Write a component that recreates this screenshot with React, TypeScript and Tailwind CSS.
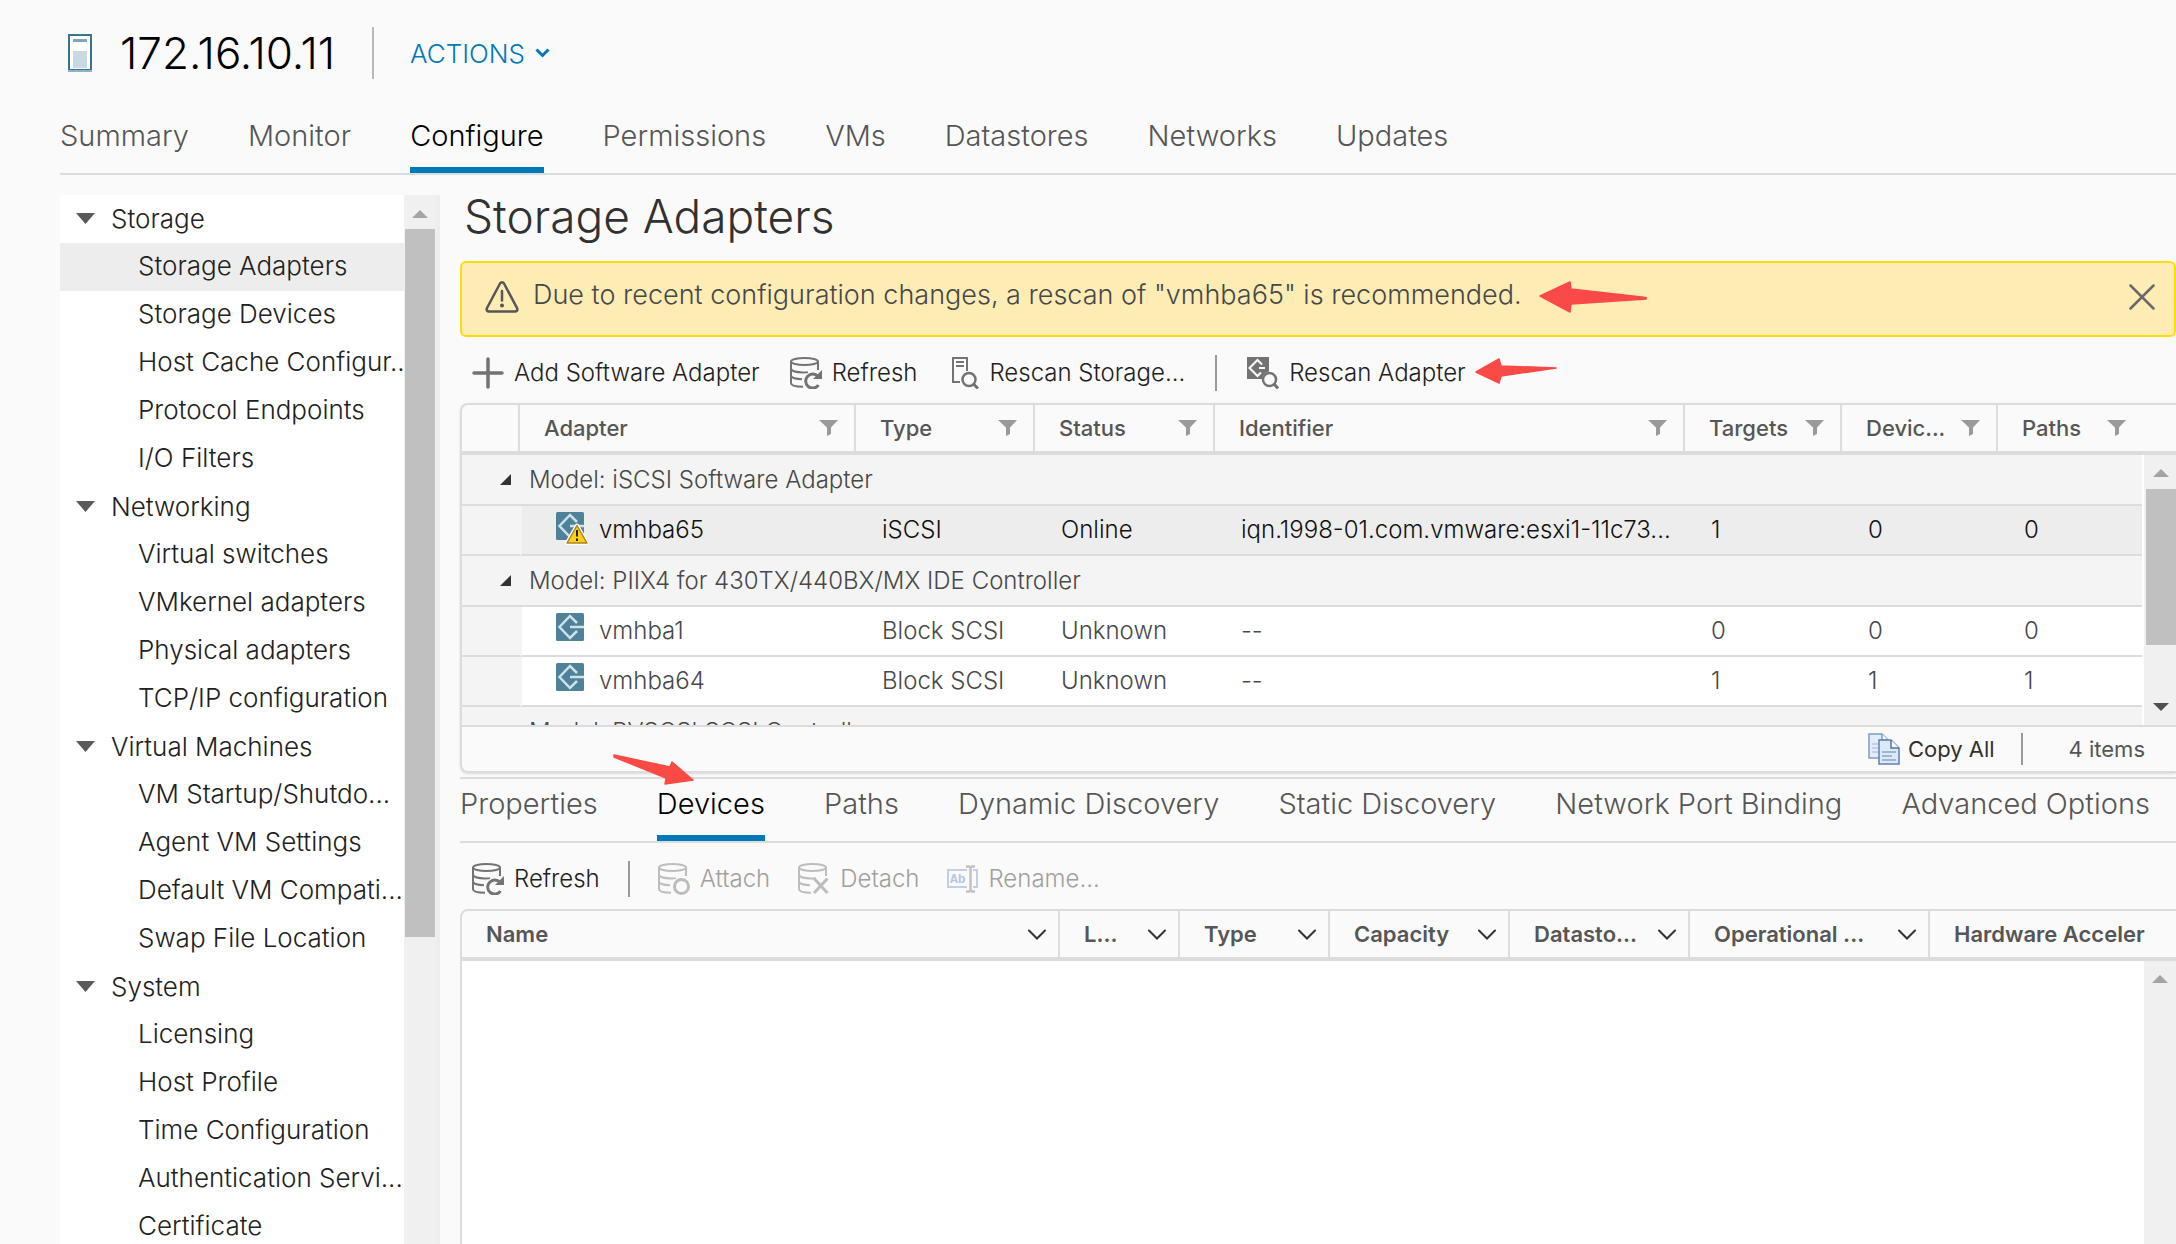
import React from "react";

const TABS = ["Summary", "Monitor", "Configure", "Permissions", "VMs", "Datastores", "Networks", "Updates"];

const SUB_TABS = [
  "Properties",
  "Devices",
  "Paths",
  "Dynamic Discovery",
  "Static Discovery",
  "Network Port Binding",
  "Advanced Options",
];

const MENU = [
  {
    title: "Storage",
    items: ["Storage Adapters", "Storage Devices", "Host Cache Configur...", "Protocol Endpoints", "I/O Filters"],
  },
  {
    title: "Networking",
    items: ["Virtual switches", "VMkernel adapters", "Physical adapters", "TCP/IP configuration"],
  },
  {
    title: "Virtual Machines",
    items: ["VM Startup/Shutdo...", "Agent VM Settings", "Default VM Compati...", "Swap File Location"],
  },
  {
    title: "System",
    items: ["Licensing", "Host Profile", "Time Configuration", "Authentication Servi...", "Certificate"],
  },
];

const ADAPTER_COLUMNS = [
  { label: "Adapter", width: "w-[336px]" },
  { label: "Type", width: "w-[179px]" },
  { label: "Status", width: "w-[180px]" },
  { label: "Identifier", width: "" },
  { label: "Targets", width: "w-[157px]" },
  { label: "Devic...", width: "w-[156px]" },
  { label: "Paths", width: "w-[178px]" },
];

const GROUPS = [
  {
    model: "Model: iSCSI Software Adapter",
    rows: [
      {
        selected: true,
        name: "vmhba65",
        cells: ["iSCSI", "Online", "iqn.1998-01.com.vmware:esxi1-11c73...", "1", "0", "0"],
      },
    ],
  },
  {
    model: "Model: PIIX4 for 430TX/440BX/MX IDE Controller",
    rows: [
      { selected: false, name: "vmhba1", cells: ["Block SCSI", "Unknown", "--", "0", "0", "0"] },
      { selected: false, name: "vmhba64", cells: ["Block SCSI", "Unknown", "--", "1", "1", "1"] },
    ],
  },
  { model: "Model: PVSCSI SCSI Controller", rows: [] },
];

const DEVICE_COLUMNS = [
  { label: "Name", width: "" },
  { label: "L...", width: "w-[120px]" },
  { label: "Type", width: "w-[150px]" },
  { label: "Capacity", width: "w-[180px]" },
  { label: "Datasto...", width: "w-[180px]" },
  { label: "Operational ...", width: "w-[240px]" },
];

function HostIcon() {
  return (
    <svg width="24" height="38" viewBox="0 0 24 38" aria-hidden="true">
      <rect x="1" y="1" width="22" height="35" fill="#fff" stroke="#3a7590" strokeWidth="2" />
      <rect x="0" y="36" width="24" height="2" fill="#8fb3c4" />
      <rect x="5" y="5" width="14" height="3" fill="#7fa5b8" />
      <rect x="5" y="17" width="14" height="17" fill="#c9d9e1" />
    </svg>
  );
}

function Database({ children }: { children: React.ReactNode }) {
  return (
    <svg className="shrink-0" width="32" height="32" viewBox="0 0 32 32" fill="none" stroke="currentColor" strokeWidth="2" aria-hidden="true">
      <ellipse cx="14.5" cy="4.5" rx="13.5" ry="3.5" />
      <path d="M1 4.5V26C1 28.5 6 29.8 13 29.8M28 4.5V13M1 12c1 2.400 7 3.500 13 3.400 2 0 3 0 4-.3M1 19c1 2 5 3 11 3.200" />
      {children}
    </svg>
  );
}

function RefreshIcon() {
  return (
    <Database>
      <path d="M28 19.500A7 7 0 1 0 28.500 28" strokeWidth="3" />
      <path d="M32 13v9h-9z" fill="currentColor" stroke="none" />
    </Database>
  );
}

function AttachIcon() {
  return (
    <Database>
      <circle cx="23.500" cy="23.500" r="7" strokeWidth="3" />
    </Database>
  );
}

function DetachIcon() {
  return (
    <Database>
      <path d="M16 15.500 29.500 30M29.500 15.500 16 30" strokeWidth="3" />
    </Database>
  );
}

function RenameIcon() {
  return (
    <svg className="shrink-0" width="31" height="28" viewBox="0 0 31 28" fill="none" aria-hidden="true">
      <path d="M20 5H1v17h19M26 5h4v17h-4" stroke="#c3cfe4" strokeWidth="2" />
      <text x="3" y="18" fontFamily="Liberation Mono, monospace" fontWeight="700" fontSize="13" fill="#b5c5e8">
        Ab
      </text>
      <path d="M19 1.500h3l1.500 1 1.500-1h3M23.500 2v24M19 26.500h3l1.500-1 1.500 1h3" stroke="#c2c2c2" strokeWidth="2.500" />
    </svg>
  );
}

function PlusIcon() {
  return (
    <svg width="32" height="32" viewBox="0 0 32 32" fill="none" stroke="currentColor" strokeWidth="3.500" strokeLinecap="round" aria-hidden="true">
      <path d="M16 2v28M2 16h28" />
    </svg>
  );
}

function RescanStorageIcon() {
  return (
    <svg width="32" height="32" viewBox="-5 0 32 32" fill="none" stroke="currentColor" strokeWidth="2" aria-hidden="true">
      <path d="M8 25H1V1h14v13M4 5h8M4 9h8" />
      <circle cx="17" cy="22.500" r="6.500" strokeWidth="2.500" />
      <path d="m21.500 27 4.500 4.500" strokeWidth="3" />
    </svg>
  );
}

function RescanAdapterIcon() {
  return (
    <svg width="32" height="32" viewBox="0 0 32 32" fill="none" aria-hidden="true">
      <path d="M0 0h22v14.500a9 9 0 0 0-7 7.500H0z" fill="currentColor" />
      <path d="M15 7.500 10.500 3 2.500 11l8 8 3.500-3.500M18 11h-6" stroke="#fafafa" strokeWidth="2" />
      <circle cx="22.500" cy="22.500" r="6.500" stroke="currentColor" strokeWidth="2.500" />
      <path d="m27 27 4 4.500" stroke="currentColor" strokeWidth="3" />
    </svg>
  );
}

function AdapterIcon({ warning }: { warning: boolean }) {
  return (
    <svg className="shrink-0" width="32" height="36" viewBox="0 0 32 36" fill="none" aria-hidden="true">
      <rect width="28" height="28" rx="1.500" fill="#4f8199" />
      <path d="M21 10 14 3 3.500 14 14 25l7-7M28 14H14" stroke="#cde3ec" strokeWidth="2.500" />
      {warning && (
        <>
          <path d="M21 13.500 31 31H11z" fill="#ffd012" stroke="#fff" strokeWidth="4" strokeLinejoin="round" />
          <path d="M21 13.500 31 31H11z" fill="#ffd012" stroke="#a8842a" strokeWidth="1.500" strokeLinejoin="round" />
          <path d="M21 18v6.500M21 26.500V29" stroke="#222" strokeWidth="2" />
        </>
      )}
    </svg>
  );
}

function WarningIcon() {
  return (
    <svg className="shrink-0" width="34" height="32" viewBox="0 0 34 32" fill="none" stroke="#565656" strokeWidth="2.500" aria-hidden="true">
      <path d="M15 2.500c1-1.600 3-1.600 4 0l13 24.500c1 2-.2 3.500-2 3.500H4c-1.800 0-3-1.500-2-3.500z" />
      <path d="M17 10v9.500" strokeLinecap="round" />
      <circle cx="17" cy="24.500" r="2" fill="#565656" stroke="none" />
    </svg>
  );
}

function CloseIcon() {
  return (
    <svg width="26" height="26" viewBox="0 0 26 26" stroke="#696969" strokeWidth="2.500" strokeLinecap="round" aria-hidden="true">
      <path d="m1.500 1.500 23 23M24.500 1.500l-23 23" />
    </svg>
  );
}

function CopyIcon() {
  return (
    <svg width="32" height="32" viewBox="0 0 32 32" aria-hidden="true">
      <path d="M1 1h13l6 6v18H1z" fill="#e3edf9" stroke="#7d9cc8" strokeWidth="1.500" />
      <path d="M14 1v6h6" fill="#fff" stroke="#7d9cc8" strokeWidth="1.500" />
      <path d="M4 11h6M4 15h6M4 19h6" stroke="#b4c8e2" strokeWidth="1.500" />
      <path d="M11 7h12l8 8v16H11z" fill="#dce9f8" stroke="#5f80b0" strokeWidth="1.500" />
      <path d="M23 7v8h8" fill="#fff" stroke="#4f719f" strokeWidth="1.500" />
      <path d="M14 19h14M14 23h10M14 27h14" stroke="#8ba4c6" strokeWidth="1.500" />
    </svg>
  );
}

function FilterIcon() {
  return (
    <svg className="shrink-0" width="19" height="16" viewBox="0 0 19 16" fill="#9a9a9a" aria-hidden="true">
      <path d="M0 0h19l-7 7.500V14l-4 2V7.500z" />
    </svg>
  );
}

function Chevron() {
  return (
    <svg className="shrink-0" width="18" height="11" viewBox="0 0 18 11" fill="none" stroke="#333" strokeWidth="2" strokeLinecap="round" aria-hidden="true">
      <path d="m1 1.500 8 8 8-8" />
    </svg>
  );
}

function Arrow({ points, box, className }: { points: string; box: [number, number]; className: string }) {
  return (
    <svg
      className={"pointer-events-none absolute " + className}
      width={box[0]}
      height={box[1]}
      viewBox={`0 0 ${box[0]} ${box[1]}`}
      fill="#f94a45"
      stroke="#f94a45"
      strokeWidth="1.500"
      strokeLinejoin="round"
      aria-hidden="true"
    >
      <polygon points={points} />
    </svg>
  );
}

function ScrollArrow({ down = false, dark = false }: { down?: boolean; dark?: boolean }) {
  return (
    <svg width="16" height="8" viewBox="0 0 16 8" fill={dark ? "#505050" : "#a3a3a3"} aria-hidden="true">
      <path d={down ? "M0 0h16L8 8z" : "M0 8h16L8 0z"} />
    </svg>
  );
}

function ToolButton({ icon, label, disabled = false }: { icon: React.ReactNode; label: string; disabled?: boolean }) {
  return (
    <button
      type="button"
      disabled={disabled}
      className={"flex items-center gap-2.5 whitespace-nowrap " + (disabled ? "text-[#bdbdbd]" : "text-[#737373]")}
    >
      {icon}
      <span className={disabled ? "text-[#a0a0a0]" : "text-[#212121]"}>{label}</span>
    </button>
  );
}

function Header() {
  return (
    <header>
      <div className="flex h-[105px] items-start pl-[68px] pt-[27px]">
        <div className="flex h-[52px] items-center">
          <HostIcon />
          <h1 className="ml-7 w-[252px] text-[44px] leading-[50px] font-light text-black">172.16.10.11</h1>
          <div className="h-full w-0.5 bg-[#b8b8b8]" />
          <button type="button" className="ml-9 flex items-center gap-2.5 text-[26px] font-light text-[#0079b8]">
            ACTIONS
            <svg width="15" height="10" viewBox="0 0 15 10" fill="none" stroke="currentColor" strokeWidth="3" aria-hidden="true">
              <path d="m1.500 1.500 6 6 6-6" />
            </svg>
          </button>
        </div>
      </div>
      <div role="tablist" className="ml-[60px] flex h-[70px] gap-[59px] border-b-2 border-[#dcdcdc] text-[29px] font-light">
        {TABS.map((t) => (
          <button
            key={t}
            type="button"
            role="tab"
            aria-selected={t === "Configure"}
            className={
              "border-b-[6px] " +
              (t === "Configure" ? "border-[#0079b8] text-black" : "border-transparent text-[#565656]")
            }
          >
            {t}
          </button>
        ))}
      </div>
    </header>
  );
}

function Sidebar() {
  return (
    <aside className="flex w-[380px] shrink-0 overflow-hidden bg-white text-[26px] font-light text-[#212121]">
      <nav className="min-w-0 flex-1">
        {MENU.map((g) => (
          <section key={g.title}>
            <button type="button" className="flex h-12 w-full items-center pb-0.5 pl-4">
              <svg width="19" height="11" viewBox="0 0 19 11" fill="#5a5a5a" aria-hidden="true">
                <path d="M0 0h19l-9.500 11z" />
              </svg>
              <span className="ml-4">{g.title}</span>
            </button>
            <ul>
              {g.items.map((item) => (
                <li key={item}>
                  <a
                    href="#"
                    className={
                      "block h-12 pl-[78px] leading-[46px] whitespace-nowrap " +
                      (item === "Storage Adapters" ? "bg-[#ededed]" : "")
                    }
                  >
                    {item}
                  </a>
                </li>
              ))}
            </ul>
          </section>
        ))}
      </nav>
      <div className="flex w-9 flex-col items-center border-r-4 border-[#ebeef1] bg-[#f0f0f0]">
        <div className="flex h-[34px] items-center pt-1">
          <ScrollArrow />
        </div>
        <div className="h-[708px] w-[30px] bg-[#c0c0c0]" />
      </div>
    </aside>
  );
}

function AdapterGrid() {
  return (
    <section className="rounded-l-lg border-2 border-r-0 border-[#dcdcdc] shadow-sm">
      <div className="relative h-[320px] overflow-hidden">
        <table className="w-full table-fixed border-separate border-spacing-0 text-left">
          <colgroup>
            <col className="w-[58px]" />
            {ADAPTER_COLUMNS.map((c) => (
              <col key={c.label} className={c.width} />
            ))}
          </colgroup>
          <thead>
            <tr className="h-[50px] text-[22px] text-[#565656]">
              <th className="border-r-2 border-b-4 border-[#dcdcdc]" />
              {ADAPTER_COLUMNS.map((c) => (
                <th
                  key={c.label}
                  className="border-r-2 border-b-4 border-[#dcdcdc] py-0 pl-6 pr-4 font-medium last:border-r-0 last:pr-[50px]"
                >
                  <div className="flex items-center justify-between">
                    {c.label}
                    <button type="button" aria-label={"Filter " + c.label}>
                      <FilterIcon />
                    </button>
                  </div>
                </th>
              ))}
            </tr>
          </thead>
          <tbody className="text-[24px] font-light text-[#484848]">
            {GROUPS.map((g) => (
              <React.Fragment key={g.model}>
                <tr className="h-[51px] bg-[#f4f4f4]">
                  <td colSpan={8} className="border-b-2 border-[#dcdcdc] p-0">
                    <div className="flex items-center gap-[18px] pl-[38px]">
                      <svg width="11" height="11" viewBox="0 0 11 11" fill="#333" aria-hidden="true">
                        <path d="M11 0v11H0z" />
                      </svg>
                      {g.model}
                    </div>
                  </td>
                </tr>
                {g.rows.map((r) => (
                  <tr key={r.name} className={"h-[50px] " + (r.selected ? "bg-[#ededed] text-[#111111]" : "bg-white")}>
                    <td className="border-b-2 border-[#dcdcdc] bg-[#f4f4f4] p-0" />
                    <td className="border-b-2 border-l-2 border-[#dcdcdc] border-l-[#f4f4f4] py-0 pl-[34px]">
                      <div className="flex items-center gap-[11px]">
                        <AdapterIcon warning={r.selected} />
                        {r.name}
                      </div>
                    </td>
                    {r.cells.map((c, i) => (
                      <td key={i} className="truncate border-b-2 border-[#dcdcdc] py-0 pl-[26px]">
                        {c}
                      </td>
                    ))}
                  </tr>
                ))}
              </React.Fragment>
            ))}
          </tbody>
        </table>
        <div className="absolute top-[50px] right-0 bottom-0 flex w-[34px] flex-col items-center border-l-2 border-white bg-[#f0f0f0] pl-0.5">
          <div className="flex h-[34px] shrink-0 items-center pt-0.5">
            <ScrollArrow />
          </div>
          <div className="h-[156px] w-full shrink-0 bg-[#c0c0c0]" />
          <div className="mt-auto pb-3.5">
            <ScrollArrow down dark />
          </div>
        </div>
      </div>
      <footer className="flex h-[46px] items-center justify-end border-t-2 border-[#dcdcdc] pr-[31px] text-[22px] text-[#565656]">
        <button type="button" className="flex items-center gap-2 text-[#313131]">
          <CopyIcon />
          Copy All
        </button>
        <div className="mr-[46px] ml-[26px] h-8 w-0.5 bg-[#9a9a9a]" />
        <span>4 items</span>
      </footer>
    </section>
  );
}

function DeviceGrid() {
  return (
    <section className="relative flex-1 rounded-tl-lg border-t-2 border-l-2 border-[#dcdcdc]">
      <table className="w-full table-fixed border-separate border-spacing-0 text-left text-[22px] text-[#565656]">
        <colgroup>
          {DEVICE_COLUMNS.map((c) => (
            <col key={c.label} className={c.width} />
          ))}
          <col className="w-[246px]" />
        </colgroup>
        <thead>
          <tr className="h-[50px]">
            {DEVICE_COLUMNS.map((c) => (
              <th key={c.label} className="border-r-2 border-b-4 border-[#dcdcdc] py-0 pr-3 pl-6 font-semibold whitespace-nowrap">
                <div className="flex items-center justify-between">
                  {c.label}
                  <button type="button" aria-label={"Open menu for " + c.label}>
                    <Chevron />
                  </button>
                </div>
              </th>
            ))}
            <th className="border-b-4 border-[#dcdcdc] py-0 pr-6 pl-6 font-semibold whitespace-nowrap">Hardware Acceler</th>
          </tr>
        </thead>
      </table>
      <div className="absolute inset-x-0 top-[50px] bottom-0 flex justify-end bg-white">
        <div className="flex w-8 flex-col items-center bg-[#f0f0f0] pt-3.5">
          <ScrollArrow />
        </div>
      </div>
    </section>
  );
}

export default function App() {
  return (
    <div className="flex h-screen flex-col overflow-hidden bg-[#fafafa] font-['Inter',sans-serif]">
      <Header />
      <div className="flex min-h-0 flex-1 pt-5 pl-[60px]">
        <Sidebar />
        <main className="relative ml-5 flex min-w-0 flex-1 flex-col">
          <h2 className="h-[66px] pl-1 text-[46px] leading-[42px] font-light text-[#313131]">Storage Adapters</h2>
          <div role="alert" className="flex h-[76px] items-center rounded-md border-2 border-[#ffdc0b] bg-[#feecb5] pb-1 pl-[23px] text-[27px] font-light text-[#484848]">
            <WarningIcon />
            <p className="ml-3.5 flex-1 pb-1">Due to recent configuration changes, a rescan of "vmhba65" is recommended.</p>
            <button type="button" aria-label="Close" className="mr-[19px]">
              <CloseIcon />
            </button>
          </div>
          <div className="flex h-[66px] items-center gap-[30px] pt-[6px] pl-3 text-[24px] font-light">
            <ToolButton icon={<PlusIcon />} label="Add Software Adapter" />
            <ToolButton icon={<RefreshIcon />} label="Refresh" />
            <ToolButton icon={<RescanStorageIcon />} label="Rescan Storage..." />
            <div className="h-9 w-0.5 bg-[#9a9a9a]" />
            <ToolButton icon={<RescanAdapterIcon />} label="Rescan Adapter" />
          </div>
          <AdapterGrid />
          <div role="tablist" className="mt-1 flex h-[66px] justify-between border-y-2 border-[#dcdcdc] pr-[26px] text-[29px] font-light">
            {SUB_TABS.map((t) => (
              <button
                key={t}
                type="button"
                role="tab"
                aria-selected={t === "Devices"}
                className={
                  "border-b-[6px] pb-1.5 whitespace-nowrap " +
                  (t === "Devices" ? "border-[#0079b8] text-black" : "border-transparent text-[#565656]")
                }
              >
                {t}
              </button>
            ))}
          </div>
          <div className="flex h-[66px] items-center gap-7 pt-[6px] pl-3 text-[24px] font-light">
            <ToolButton icon={<RefreshIcon />} label="Refresh" />
            <div className="h-9 w-0.5 bg-[#9a9a9a]" />
            <ToolButton icon={<AttachIcon />} label="Attach" disabled />
            <ToolButton icon={<DetachIcon />} label="Detach" disabled />
            <ToolButton icon={<RenameIcon />} label="Rename..." disabled />
          </div>
          <DeviceGrid />
          <Arrow className="top-[84px] left-[1078px]" box={[112, 36]} points="2,17 32,3 33,10 108,18.500 108,20 33,25 32,33" />
          <Arrow className="top-[162px] left-[1014px]" box={[86, 30]} points="2,15 25,2 27,9 82,11 27,19 25,26" />
          <Arrow className="top-[558px] left-[152px]" box={[84, 34]} points="2,2 58,14 60,9 81,27 53,31 54,25 2,4" />
        </main>
      </div>
    </div>
  );
}
